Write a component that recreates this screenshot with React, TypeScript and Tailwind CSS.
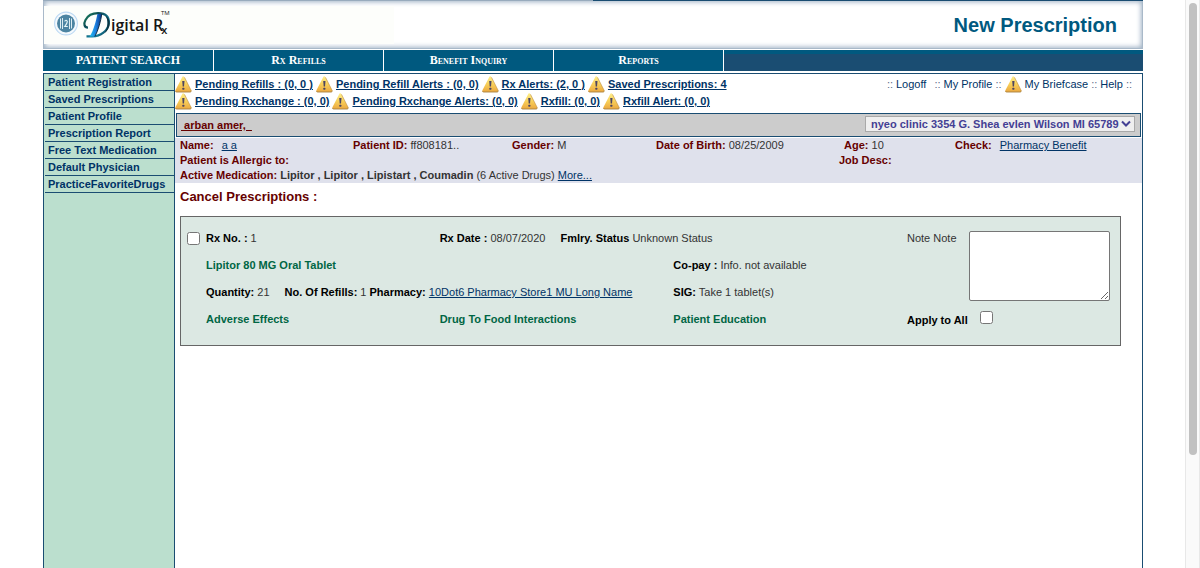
import React from "react";

const navItems = ["Rx Refills", "Benefit Inquiry", "Reports"];

const sideItems = [
  "Patient Registration",
  "Saved Prescriptions",
  "Patient Profile",
  "Prescription Report",
  "Free Text Medication",
  "Default Physician",
  "PracticeFavoriteDrugs",
];

const alertRows = [
  ["Pending Refills : (0, 0 )", "Pending Refill Alerts : (0, 0)", "Rx Alerts: (2, 0 )", "Saved Prescriptions: 4"],
  ["Pending Rxchange : (0, 0)", "Pending Rxchange Alerts: (0, 0)", "Rxfill: (0, 0)", "Rxfill Alert: (0, 0)"],
];

function WarningIcon() {
  return (
    <svg className="h-[17px] w-[17px] shrink-0" viewBox="0 0 17 17" aria-hidden="true">
      <defs>
        <linearGradient id="warn" x1="0" y1="0" x2="0" y2="1">
          <stop offset="0" stopColor="#fdee8c" />
          <stop offset="0.5" stopColor="#f8d05a" />
          <stop offset="1" stopColor="#eba840" />
        </linearGradient>
      </defs>
      <path d="M8.2 0.2 Q9 0.2 9.5 1.4 L16.2 14.6 Q16.5 16 15.2 16 L1.2 16 Q0 16 0.3 14.6 L7 1.4 Q7.4 0.2 8.2 0.2Z" fill="url(#warn)" />
      <path d="M0.6 15 Q0.6 16 1.6 16 L15.2 16 Q16.4 16 16.1 14.5" fill="none" stroke="#a9823f" strokeWidth="0.9" />
      <path d="M9.5 1.4 L16.2 14.6" stroke="#c8984a" strokeWidth="0.7" />
      <path d="M7.2 5 H9.5 L9 10.6 H7.7Z" fill="#4d4560" />
      <rect x="7.4" y="11.8" width="1.9" height="1.9" rx="0.5" fill="#4d4560" />
    </svg>
  );
}

function Logo() {
  return (
    <svg className="h-[38px] w-[130px]" viewBox="0 0 130 38" role="img" aria-label="Digital Rx">
      <defs>
        <linearGradient id="dFill" x1="0" y1="0" x2="1" y2="1">
          <stop offset="0" stopColor="#1c8a5c" />
          <stop offset="0.3" stopColor="#0c4a55" />
          <stop offset="0.7" stopColor="#1688a8" />
          <stop offset="1" stopColor="#06222c" />
        </linearGradient>
        <linearGradient id="dStem" x1="0" y1="0" x2="1" y2="0">
          <stop offset="0" stopColor="#22c0ee" />
          <stop offset="0.5" stopColor="#1c80e0" />
          <stop offset="1" stopColor="#0a2f80" />
        </linearGradient>
      </defs>
      <circle cx="22" cy="17.5" r="11.4" fill="#f4f9fd" stroke="#bcd9f4" strokeWidth="1.1" />
      <circle cx="22" cy="17.5" r="9" fill="#4c84a2" />
      <path d="M16.5 12.5 V22.5 M18.5 12 V23 M25.5 12 V23 M27.5 12.5 V22.5" stroke="#dcecf2" strokeWidth="1" fill="none" />
      <path d="M20.6 15.4 Q22 13.2 23.3 15.2 Q23.4 17 20.7 20.5 H23.8" stroke="#e6f6f8" strokeWidth="1.1" fill="none" />
      <path d="M44 21.6 C40 21.6 39.6 17.5 41.5 14 C44 9.2 49 7.2 54 7.2 C62.5 7.2 65.4 11.5 64.8 17 C64 25 56.5 30.4 48.5 30.4 L42.5 30.4" fill="none" stroke="url(#dFill)" strokeWidth="2.2" />
      <path d="M61 9.2 C68 13 67 22 60.5 27.2 C64 21.5 64.8 14 61 9.2Z" fill="#0a3442" />
      <path d="M57.8 8 L53.4 8 C52 15 49.5 25 45.6 30.6 L50.8 30.6 C54.4 24 56.8 15 57.8 8Z" fill="url(#dStem)" />
      <path d="M57.8 8 C56.8 15 54.4 24 50.8 30.6" fill="none" stroke="#06243a" strokeWidth="0.9" />
      <text x="67" y="25" fontSize="16" fontWeight="600" fontFamily='"Open Sans", "Noto Sans", sans-serif' fill="#161616">igital</text>
      <text x="109" y="25" fontSize="16" fontWeight="600" fontFamily='"Open Sans", "Noto Sans", sans-serif' fill="#161616">
        R<tspan dx="-2" dy="3" fontSize="11">x</tspan>
      </text>
      <text x="117" y="9" fontSize="6" fontFamily='"Open Sans", "Noto Sans", sans-serif' fill="#161616">TM</text>
    </svg>
  );
}

function Dots() {
  return <span className="text-[#5b6b88]">::</span>;
}

const label = "font-bold text-black";
const infoLabel = "font-bold text-[#660000]";
const link = "text-[#003366] underline";
const greenLink = "font-bold text-[#006644]";

export default function App() {
  return (
    <div className="flex h-screen bg-white font-['Liberation_Sans',Arial,sans-serif] text-[11px] leading-[15px] text-[#333]">
      <div className="flex min-w-0 flex-1 flex-col pr-[42px] pl-[43px]">
        <header>
          <div className="flex">
            <div className="h-px flex-1 bg-[#98abbd]" />
            <div className="h-px flex-1 bg-[#1a4d72]" />
          </div>
          <div className="flex h-12 items-center justify-between border-x border-b border-[#a9b9c9] pr-[25px] shadow-[inset_0_0_5px_1px_#9db0c4]">
            <div className="flex h-[38px] w-[350px] items-center bg-[#fdfefb]">
              <Logo />
            </div>
            <h1 className="text-[20px] leading-6 font-bold text-[#00597f]">New Prescription</h1>
          </div>
        </header>

        <nav className="mt-px flex h-[21px] bg-[#1a4d72] font-['Liberation_Serif','Times_New_Roman',serif] text-[12px] leading-5 font-bold text-white">
          <a href="#search" className="w-[171px] border-r border-white bg-[#00597f] text-center">PATIENT SEARCH</a>
          {navItems.map((item) => (
            <a key={item} href="#nav" className="w-[170px] border-r border-white bg-[#00597f] text-center [font-variant:small-caps]">
              {item}
            </a>
          ))}
          <div className="h-1 flex-1 bg-[#00597f]" />
        </nav>

        <div className="mt-[2px] flex flex-1 border-x border-t border-[#1a4d72]">
          <aside className="w-[131px] shrink-0 border-r border-[#1a4d72] bg-[#bbdfce] pl-px">
            {sideItems.map((item) => (
              <a key={item} href="#side" className="block h-[17px] border-b border-[#1a4d72] pl-[3px] leading-4 font-bold text-[#003366]">
                {item}
              </a>
            ))}
          </aside>

          <main className="min-w-0 flex-1">
            <div className="flex justify-between pt-[2px] pr-[10px]">
              <div>
                {alertRows.map((row, i) => (
                  <div key={i} className="flex h-[17px] items-center gap-[3px] whitespace-nowrap">
                    {row.map((text) => (
                      <React.Fragment key={text}>
                        <WarningIcon />
                        <a href="#alerts" className="font-bold text-[#003366] underline">{text}</a>
                      </React.Fragment>
                    ))}
                  </div>
                ))}
              </div>
              <div className="flex h-[17px] items-center gap-[3px] whitespace-nowrap text-[#003366]">
                <Dots />
                <a href="#logoff" className="mr-[5px]">Logoff</a>
                <Dots />
                <a href="#profile">My Profile</a>
                <Dots />
                <WarningIcon />
                <a href="#briefcase">My Briefcase</a>
                <Dots />
                <a href="#help">Help</a>
                <Dots />
              </div>
            </div>

            <div className="mx-px mt-[3px] flex h-6 items-start justify-between border border-[#1a4d72] bg-[#ccc] pt-[2px] pr-[5px] pl-1">
              <a href="#patient" className="font-bold leading-[18px] text-[#660000] underline">&nbsp;arban amer,&nbsp;&nbsp;</a>
              <div className="relative">
                <select
                  aria-label="Clinic"
                  className="block h-4 w-[270px] appearance-none border border-[#a9a9a9] bg-[#efefef] pl-[5px] text-[11px] leading-[14px] font-bold text-[#444094]"
                >
                  <option>nyeo clinic 3354 G. Shea evlen Wilson MI 65789</option>
                </select>
                <svg className="pointer-events-none absolute top-1 right-1 h-2 w-[10px]" viewBox="0 0 10 8" aria-hidden="true">
                  <path d="M1 1.5 L5 5.5 L9 1.5" fill="none" stroke="#444094" strokeWidth="2" />
                </svg>
              </div>
            </div>

            <section className="mt-px bg-[#dfe1ec]">
              <div className="grid grid-cols-[178fr_159fr_144fr_183fr_116fr_187fr] whitespace-nowrap">
                <div className="pl-[5px]">
                  <span className={infoLabel}>Name:</span>
                  <a href="#name" className={link + " ml-2"}>a a</a>
                </div>
                <div><span className={infoLabel}>Patient ID:</span> ff808181..</div>
                <div><span className={infoLabel}>Gender:</span> M</div>
                <div><span className={infoLabel}>Date of Birth:</span> 08/25/2009</div>
                <div className="pl-[5px]"><span className={infoLabel}>Age:</span> 10</div>
                <div>
                  <span className={infoLabel}>Check:</span>
                  <a href="#benefit" className={link + " ml-2"}>Pharmacy Benefit</a>
                </div>
                <div className={infoLabel + " col-span-4 pl-[5px]"}>Patient is Allergic to:</div>
                <div className={infoLabel + " col-span-2"}>Job Desc:</div>
              </div>
              <div className="pl-[5px]">
                <span className={infoLabel}>Active Medication:</span>{" "}
                <b>Lipitor , Lipitor , Lipistart , Coumadin</b> (6 Active Drugs){" "}
                <a href="#more" className={link}>More...</a>
              </div>
            </section>

            <h2 className="mt-[5px] pl-[5px] text-[13px] leading-[18px] font-bold text-[#660000]">Cancel Prescriptions :</h2>

            <section className="mt-[10px] mr-[21px] ml-[5px] grid h-[130px] grid-cols-[25px_1fr_213px] border border-[#666] bg-[#dce8e3] pt-2">
              <input
                type="checkbox"
                id="rx1"
                aria-label="Select prescription 1"
                className="mt-[7px] ml-[6px] h-[13px] w-[13px]"
              />
              <div className="grid h-[108px] grid-cols-3 leading-[27px] whitespace-nowrap">
                <label htmlFor="rx1"><b className={label}>Rx No. :</b> 1</label>
                <div className="col-span-2 flex gap-[15px]">
                  <div><b className={label}>Rx Date :</b> 08/07/2020</div>
                  <div><b className={label}>Fmlry. Status</b> Unknown Status</div>
                </div>
                <div className={greenLink + " col-span-2"}>Lipitor 80 MG Oral Tablet</div>
                <div><b className={label}>Co-pay :</b> Info. not available</div>
                <div className="col-span-2 flex">
                  <div className="mr-[15px]"><b className={label}>Quantity:</b> 21</div>
                  <div className="mr-[3px]"><b className={label}>No. Of Refills:</b> 1</div>
                  <div>
                    <b className={label}>Pharmacy:</b>{" "}
                    <a href="#pharmacy" className={link}>10Dot6 Pharmacy Store1 MU Long Name</a>
                  </div>
                </div>
                <div><b className={label}>SIG:</b> Take 1 tablet(s)</div>
                <a href="#adverse" className={greenLink}>Adverse Effects</a>
                <a href="#food" className={greenLink}>Drug To Food Interactions</a>
                <a href="#education" className={greenLink}>Patient Education</a>
              </div>
              <div className="pr-[10px]">
                <div className="flex justify-between">
                  <label htmlFor="note" className="leading-[27px]">Note Note</label>
                  <textarea id="note" className="mt-[6px] block h-[70px] w-[141px] resize rounded-[2px] border border-[#767676] bg-white p-[2px]" />
                </div>
                <div className="mt-[10px] flex gap-3">
                  <label htmlFor="all" className={label + " pt-[2px]"}>Apply to All</label>
                  <input id="all" type="checkbox" className="h-[13px] w-[13px]" />
                </div>
              </div>
            </section>
          </main>
        </div>
      </div>

      <div className="w-[15px] shrink-0 border-x border-[#e8e8e8] bg-[#fafafa] pt-[3px]" aria-hidden="true">
        <div className="mx-auto h-4/5 w-2 rounded-full bg-[#c1c1c1]" />
      </div>
    </div>
  );
}
